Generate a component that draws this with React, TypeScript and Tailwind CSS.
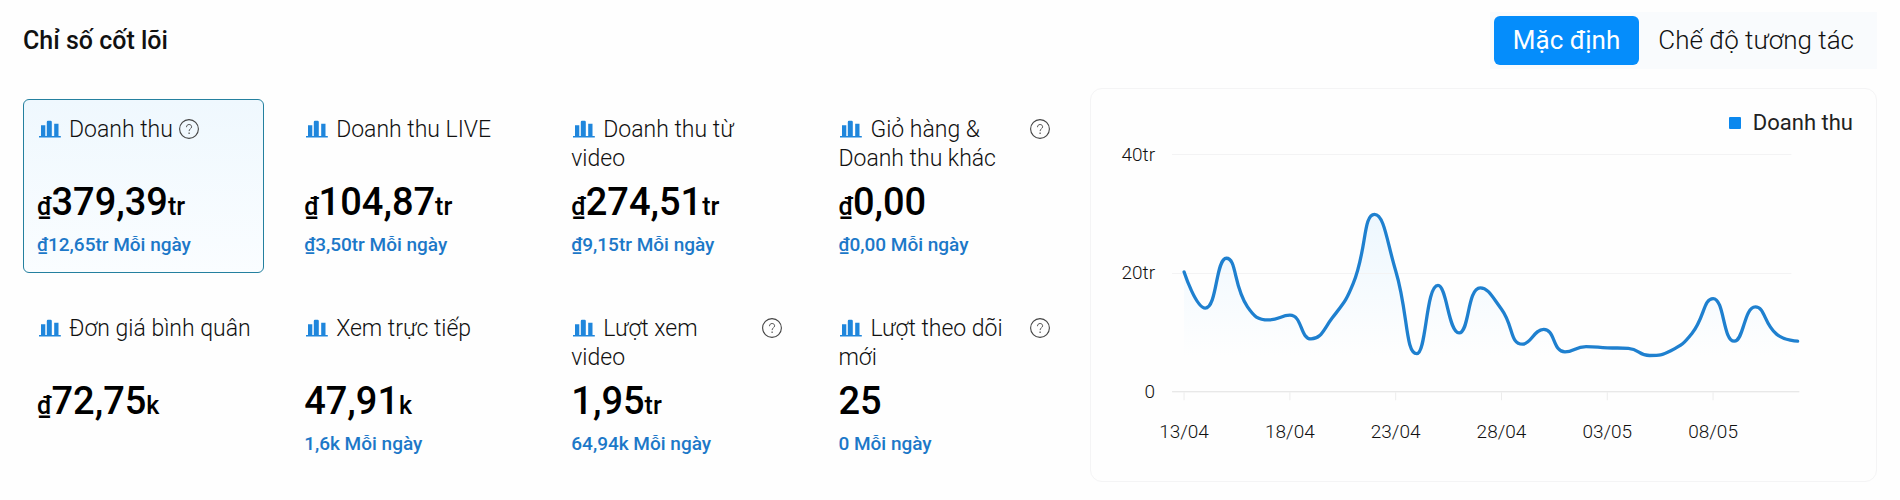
import React, { useState } from 'react';
import { clsx } from 'clsx';

interface Metric {
  id: string;
  label: string;
  currency?: boolean;
  value: string;
  unit?: string;
  perDay?: string;
  help?: boolean;
}

const METRICS: Metric[] = [
  { id: 'revenue', label: 'Doanh thu', currency: true, value: '379,39', unit: 'tr', perDay: '₫12,65tr', help: true },
  { id: 'live', label: 'Doanh thu LIVE', currency: true, value: '104,87', unit: 'tr', perDay: '₫3,50tr' },
  { id: 'video', label: 'Doanh thu từ\nvideo', currency: true, value: '274,51', unit: 'tr', perDay: '₫9,15tr' },
  { id: 'cart', label: 'Giỏ hàng &\nDoanh thu khác', currency: true, value: '0,00', perDay: '₫0,00', help: true },
  { id: 'aov', label: 'Đơn giá bình quân', currency: true, value: '72,75', unit: 'k' },
  { id: 'liveViews', label: 'Xem trực tiếp', value: '47,91', unit: 'k', perDay: '1,6k' },
  { id: 'videoViews', label: 'Lượt xem\nvideo', value: '1,95', unit: 'tr', perDay: '64,94k', help: true },
  { id: 'followers', label: 'Lượt theo dõi\nmới', value: '25', perDay: '0', help: true },
];

const MODES = ['Mặc định', 'Chế độ tương tác'];

// Daily revenue in millions, 13/04 - 12/05
const REVENUE = [
  20.2, 14.1, 22.5, 14.3, 12.1, 12.9, 8.9, 12.4, 18.3, 29.9, 20.4, 6.4, 17.9, 9.9, 17.5,
  13.9, 8, 10.5, 6.7, 7.6, 7.4, 7.3, 6.1, 6.9, 9.8, 15.7, 8.5, 14.3, 9.7, 8.5,
];
const DATES = ['13/04', '18/04', '23/04', '28/04', '03/05', '08/05'];
const Y_TICKS = [
  { value: 40, label: '40tr' },
  { value: 20, label: '20tr' },
  { value: 0, label: '0' },
];

const CHART = { left: 93, step: 21.15, bottom: 252.5, unit: 5.925 };

const toX = (index: number) => CHART.left + index * CHART.step;
const toY = (value: number) => CHART.bottom - value * CHART.unit;
const clamp = (v: number, a: number, b: number) => Math.max(Math.min(v, Math.max(a, b)), Math.min(a, b));

const smoothPath = (pts: number[][], smooth = 0.5) => {
  let d = `M${pts[0][0]} ${pts[0][1]}`;
  let cp0 = pts[0];
  for (let i = 1; i < pts.length; i++) {
    const prev = pts[i - 1];
    const [x, y] = pts[i];
    const next = pts[i + 1];
    let cp1 = [x, y];
    let nextCp0 = [x, y];
    if (next) {
      const lenPrev = Math.hypot(x - prev[0], y - prev[1]);
      const lenNext = Math.hypot(next[0] - x, next[1] - y);
      const ratio = lenNext / (lenNext + lenPrev);
      // keep both handles inside their own segment so the curve never overshoots
      nextCp0 = [0, 1].map(k => clamp(pts[i][k] + (next[k] - prev[k]) * smooth * ratio, pts[i][k], next[k]));
      cp1 = [0, 1].map(k => clamp(pts[i][k] - ((nextCp0[k] - pts[i][k]) * lenPrev) / lenNext, prev[k], pts[i][k]));
      nextCp0 = [0, 1].map(k => pts[i][k] + ((pts[i][k] - cp1[k]) * lenNext) / lenPrev);
    }
    d += `C${[...cp0, ...cp1, x, y].map(n => n.toFixed(1)).join(' ')}`;
    cp0 = nextCp0;
  }
  return d;
};

const BarsIcon = () => (
  <svg className="mr-2 inline-block h-[18px] w-6 align-[-1px]" viewBox="0 0 24 18" fill="#1f86dc" aria-hidden="true">
    <path d="M4 5.2h4.3V16h1.5V2Q9.8.7 11 .7h2.6q1.2 0 1.2 1.3v14h2.4V3.8h4.3V16h2.3v1.6H2V16h2z" />
  </svg>
);

const HelpIcon = () => (
  <svg className="mt-1 size-5 shrink-0" viewBox="0 0 20 20" fill="none" stroke="#444" role="img" aria-label="?">
    <circle cx="10" cy="10" r="9.4" strokeWidth="1.1" />
    <path d="M7.5 8.2c0-1.7 1-2.7 2.6-2.7s2.5 1 2.5 2.3c0 2-2.5 2-2.5 4.3" strokeWidth="0.9" />
    <path d="M10.1 13.6v1.3" strokeWidth="1.1" />
  </svg>
);

const MetricCard: React.FC<{ metric: Metric; active: boolean; onSelect: () => void }> = ({ metric, active, onSelect }) => (
  <button
    type="button"
    aria-pressed={active}
    onClick={onSelect}
    className={clsx(
      'flex flex-col rounded-md border pt-[15px] pr-[15px] pb-[13px] pl-[13px] text-left',
      active ? 'border-[#24809f] bg-linear-to-b from-[#eff8fe] to-[#fafdff]' : 'border-transparent'
    )}
  >
    <span className="flex h-[58px] w-full items-start gap-1.5 text-[23px] leading-[29px] font-light text-[#111]">
      <span className={clsx('whitespace-pre', metric.label.includes('\n') && 'flex-1')}>
        <BarsIcon />
        {metric.label}
      </span>
      {metric.help && <HelpIcon />}
    </span>
    <span className="mt-2 text-[38px] leading-[42px] font-medium text-black">
      {metric.currency && <span className="text-[25px] leading-none">₫</span>}
      {metric.value}
      {metric.unit && <span className="text-[25px] leading-none">{metric.unit}</span>}
    </span>
    <span className="mt-2 h-7 text-[19px] leading-7 font-medium text-[#1c78c8]">
      {metric.perDay && `${metric.perDay} Mỗi ngày`}
    </span>
  </button>
);

const RevenueChart: React.FC = () => {
  const points = REVENUE.map((value, index) => [toX(index), toY(value)]);
  const line = smoothPath(points);
  const area = `${line}L${toX(REVENUE.length - 1)} ${CHART.bottom}L${CHART.left} ${CHART.bottom}Z`;

  return (
    <svg viewBox="0 0 785 342" className="block h-auto w-full" role="img" aria-label="Doanh thu">
      <defs>
        <linearGradient id="area" x1="0" y1="0" x2="0" y2="1">
          <stop offset="0" stopColor="#edf7fe" />
          <stop offset="0.8" stopColor="#fefefe" />
        </linearGradient>
      </defs>
      <path d={area} fill="url(#area)" />
      {Y_TICKS.map(tick => (
        <g key={tick.value}>
          <path
            d={`M81 ${Math.floor(toY(tick.value)) + 0.5}H${tick.value ? 700 : 708}`}
            stroke={tick.value ? '#f3f3f4' : '#e0e0e0'}
          />
          <text x="64" y={toY(tick.value) + 6} textAnchor="end" className="fill-[#111] text-[19px] font-light">
            {tick.label}
          </text>
        </g>
      ))}
      {DATES.map((date, index) => (
        <g key={date}>
          <path d={`M${toX(index * 5)} 253v8`} stroke="#ececec" />
          <text x={toX(index * 5)} y="299" textAnchor="middle" className="fill-[#111] text-[19px] font-light">
            {date}
          </text>
        </g>
      ))}
      <path d={line} fill="none" stroke="#1f80cf" strokeWidth="3.3" strokeLinecap="round" />
    </svg>
  );
};

const App: React.FC = () => {
  const [mode, setMode] = useState(MODES[0]);
  const [selected, setSelected] = useState('revenue');

  return (
    <main className="min-h-screen bg-[#fefefe] px-[23px] pt-3 font-[Roboto,sans-serif]">
      <header className="flex items-center justify-between">
        <h1 className="text-[25px] leading-8 font-medium text-[#111]">Chỉ số cốt lõi</h1>
        <div className="flex bg-[#f9fbfd] p-1">
          {MODES.map(item => (
            <button
              key={item}
              type="button"
              aria-pressed={mode === item}
              onClick={() => setMode(item)}
              className={clsx(
                'rounded-md px-[19px] text-[26px] leading-[49px]',
                mode === item ? 'bg-[#058dfb] text-white' : 'font-light text-[#111]'
              )}
            >
              {item}
            </button>
          ))}
        </div>
      </header>

      <div className="mt-[19px] grid grid-cols-[1042fr_787fr] items-start gap-6">
        <section className="grid grid-cols-4 gap-x-[26px] gap-y-[25px] pt-[11px]">
          {METRICS.map(metric => (
            <MetricCard
              key={metric.id}
              metric={metric}
              active={selected === metric.id}
              onSelect={() => setSelected(metric.id)}
            />
          ))}
        </section>

        <section className="rounded-xl border border-[#f4f4f5] pt-[18px]">
          <div className="flex items-center justify-end gap-3 pr-[23px] text-[22px] leading-8 text-[#222]">
            <span className="size-3 rounded-[1px] bg-[#0b88ee]" />
            Doanh thu
          </div>
          <RevenueChart />
        </section>
      </div>
    </main>
  );
};

export default App;
